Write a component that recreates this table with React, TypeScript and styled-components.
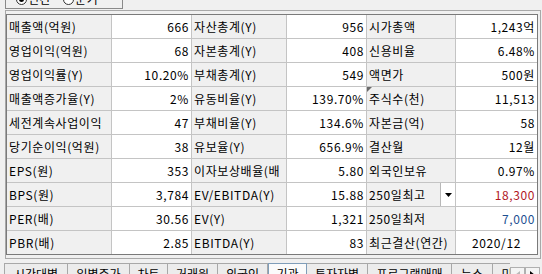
import { FC } from "react";
import styled, { createGlobalStyle } from "styled-components";

const GlobalStyle = createGlobalStyle`
  html, body {
    margin: 0;
    padding: 0;
    background: #f0f0f0;
  }
  body {
    font-family: "Noto Sans CJK KR", "Noto Sans", sans-serif;
    font-size: 12px;
    color: #000;
  }
`;

type Row = [string, string, string, string, string, string];

const rows: Row[] = [
  ["매출액(억원)", "666", "자산총계(Y)", "956", "시가총액", "1,243억"],
  ["영업이익(억원)", "68", "자본총계(Y)", "408", "신용비율", "6.48%"],
  ["영업이익률(Y)", "10.20%", "부채총계(Y)", "549", "액면가", "500원"],
  ["매출액증가율(Y)", "2%", "유동비율(Y)", "139.70%", "주식수(천)", "11,513"],
  ["세전계속사업이익", "47", "부채비율(Y)", "134.6%", "자본금(억)", "58"],
  ["당기순이익(억원)", "38", "유보율(Y)", "656.9%", "결산월", "12월"],
  ["EPS(원)", "353", "이자보상배율(배", "5.80", "외국인보유", "0.97%"],
  ["BPS(원)", "3,784", "EV/EBITDA(Y)", "15.88", "250일최고", "18,300"],
  ["PER(배)", "30.56", "EV(Y)", "1,321", "250일최저", "7,000"],
  ["PBR(배)", "2.85", "EBITDA(Y)", "83", "최근결산(연간)", "2020/12"],
];

const valueColor: Record<string, string> = {
  "18,300": "#b0171f",
  "7,000": "#1d4f91",
};

const tabs = [
  { label: "시간대별", w: 64 },
  { label: "일별주가", w: 62 },
  { label: "차트", w: 38 },
  { label: "거래원", w: 50 },
  { label: "외국인", w: 50 },
  { label: "기관", w: 39, active: true },
  { label: "투자자별", w: 61 },
  { label: "프로그램매매", w: 84 },
  { label: "뉴스", w: 41 },
  { label: "미국", w: 40 },
];

const App: FC = () => {
  return (
    <Page>
      <GlobalStyle />
      <TopBar>
        <RadioGroup>
          <RadioItem>
            <Radio $checked />
            연간
          </RadioItem>
          <RadioItem>
            <Radio />
            분기
          </RadioItem>
        </RadioGroup>
      </TopBar>

      <Panel>
        <Grid>
          {rows.map((r, i) =>
            r.map((text, j) => {
              const isLabel = j % 2 === 0;
              if (isLabel) {
                return (
                  <LabelCell key={`${i}-${j}`} $marked={text === "주식수(천)"}>
                    {text}
                    {text === "250일최고" && (
                      <DropBtn>
                        <svg width="7" height="4" viewBox="0 0 7 4">
                          <path d="M0 0h7L3.5 4z" fill="#000" />
                        </svg>
                      </DropBtn>
                    )}
                  </LabelCell>
                );
              }
              return (
                <ValueCell
                  key={`${i}-${j}`}
                  $center={text === "2020/12"}
                  $color={valueColor[text]}
                >
                  {text}
                </ValueCell>
              );
            })
          )}
        </Grid>
      </Panel>

      <TabBar>
        <TabList>
          {tabs.map((t) => (
            <Tab key={t.label} $w={t.w} $active={t.active}>
              {t.label}
            </Tab>
          ))}
        </TabList>
        <ScrollBtn>
          <svg width="5" height="8" viewBox="0 0 5 8">
            <path d="M5 0v8L0 4z" fill="#b8b8b8" />
          </svg>
        </ScrollBtn>
        <ScrollBtn>
          <svg width="5" height="8" viewBox="0 0 5 8">
            <path d="M0 0v8l5-4z" fill="#000" />
          </svg>
        </ScrollBtn>
      </TabBar>
    </Page>
  );
};

const Page = styled.div`
  width: 542px;
  height: 274px;
  overflow: hidden;
  background: #f0f0f0;
`;

const TopBar = styled.div`
  height: 10px;
  overflow: hidden;
`;

const RadioGroup = styled.div`
  margin-left: 5px;
  width: 106px;
  height: 8px;
  border: 1px solid #8a8a8a;
  border-top: none;
  display: flex;
  align-items: center;
  gap: 12px;
  padding-left: 10px;
  box-sizing: content-box;
  overflow: hidden;
  position: relative;
`;

const RadioItem = styled.span`
  display: flex;
  align-items: center;
  gap: 1px;
  line-height: 12px;
  margin-top: -10px;
  letter-spacing: 0.5px;
`;

const Radio = styled.span<{ $checked?: boolean }>`
  width: 9px;
  height: 9px;
  border: 1px solid #333;
  border-radius: 50%;
  background: #fff;
  display: inline-flex;
  align-items: center;
  justify-content: center;
  &::after {
    content: "";
    width: 5px;
    height: 5px;
    border-radius: 50%;
    background: ${(p) => (p.$checked ? "#000" : "transparent")};
  }
`;

const Panel = styled.div`
  margin-left: 5px;
  width: 533px;
  border: 1px solid #a8a8a8;
  padding: 3px 1px 3px 0;
`;

const Grid = styled.div`
  display: grid;
  grid-template-columns: 104px 79px 94px 79px 88px 81px;
  grid-auto-rows: 23px;
  gap: 1px;
  background: #c4c4c4;
  border: 1px solid #7a7a7a;
  width: 530px;
`;

const LabelCell = styled.div<{ $marked?: boolean }>`
  position: relative;
  display: flex;
  align-items: center;
  padding-left: 2px;
  background: #f0f0f0;
  white-space: nowrap;
  overflow: hidden;
  letter-spacing: 0.6px;
  &::before {
    content: "";
    display: ${(p) => (p.$marked ? "block" : "none")};
    position: absolute;
    left: 0;
    top: 0;
    border-top: 5px solid #6a6a6a;
    border-right: 5px solid transparent;
  }
`;

const DropBtn = styled.span`
  margin-left: auto;
  align-self: stretch;
  width: 14px;
  background: #fff;
  border-left: 1px solid #b8b8b8;
  display: flex;
  align-items: center;
  justify-content: center;
`;

const ValueCell = styled.div<{ $center?: boolean; $color?: string }>`
  display: flex;
  align-items: center;
  justify-content: ${(p) => (p.$center ? "center" : "flex-end")};
  padding-right: ${(p) => (p.$center ? "0" : "2px")};
  background: #fff;
  color: ${(p) => p.$color || "#000"};
  white-space: nowrap;
  letter-spacing: 0.6px;
`;

const TabBar = styled.div`
  margin-top: 4px;
  margin-left: 4px;
  display: flex;
  height: 20px;
`;

const TabList = styled.div`
  display: flex;
  width: 506px;
  overflow: hidden;
`;

const Tab = styled.div<{ $w: number; $active?: boolean }>`
  flex: 0 0 ${(p) => p.$w}px;
  box-sizing: border-box;
  border: 1px solid ${(p) => (p.$active ? "#7f9db9" : "#a8a8a8")};
  border-left-width: ${(p) => (p.$active ? "1px" : "0")};
  border-bottom: none;
  background: ${(p) => (p.$active ? "#fbfbfb" : "#ececec")};
  text-align: center;
  padding-top: 3px;
  line-height: 14px;
  white-space: nowrap;
  overflow: hidden;
  &:first-child {
    border-left-width: 1px;
  }
`;

const ScrollBtn = styled.div`
  width: 15px;
  height: 16px;
  box-sizing: border-box;
  border: 1px solid #b0b0b0;
  background: #f4f4f4;
  display: flex;
  align-items: center;
  justify-content: center;
  margin-top: 4px;
`;

export default App;
